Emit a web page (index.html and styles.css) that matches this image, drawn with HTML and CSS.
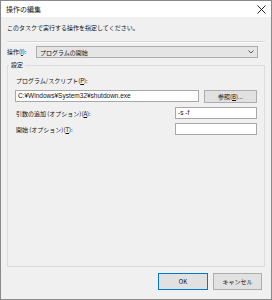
FILE: index.html
```
<!DOCTYPE html>
<html lang="ja">
<head>
  <meta charset="UTF-8" />
  <meta name="viewport" content="width=device-width, initial-scale=1" />
  <link rel="stylesheet" href="styles.css">
</head>
<body>
  <div class="window">
    <div class="titlebar">
      <span class="title">操作の編集</span>
      <svg class="close" width="9" height="9" viewBox="0 0 9 9">
        <path d="M0.5 0.5 L8.5 8.5 M8.5 0.5 L0.5 8.5" stroke="#222" stroke-width="1" fill="none" />
      </svg>
    </div>
    <div class="dialog-body">
      <p class="prompt">このタスクで実行する操作を指定してください。</p>
      <div class="sep"></div>
      <div class="action-row">
        <span class="action-label">操作(<u>I</u>):</span>
        <div class="combo">
          <span>プログラムの開始</span>
          <svg class="chevron" width="6" height="4" viewBox="0 0 6 4">
            <path d="M0.5 0.5 L3 3 L5.5 0.5" stroke="#555" stroke-width="1" fill="none" />
          </svg>
        </div>
      </div>

      <fieldset class="group">
        <legend>設定</legend>
        <div class="field-label">プログラム/スクリプト(<u>P</u>):</div>
        <div class="prog-row">
          <div class="textbox wide">C:¥Windows¥System32¥shutdown.exe</div>
          <button class="btn browse">参照(<u>B</u>)...</button>
        </div>
        <div class="opt-row">
          <span class="opt-label">引数の追加 (オプション)(<u>A</u>):</span>
          <div class="textbox short">-s -f</div>
        </div>
        <div class="opt-row">
          <span class="opt-label">開始 (オプション)(<u>T</u>):</span>
          <div class="textbox short"></div>
        </div>
      </fieldset>

      <div class="footer">
        <button class="btn ok">OK</button>
        <button class="btn">キャンセル</button>
      </div>
    </div>
  </div>
</body>
</html>
```

FILE: styles.css
```
html, body {
  margin: 0;
  padding: 0;
  background: #f0f0f0;
  font-family: "Noto Sans CJK JP", "Noto Sans", sans-serif;
  font-size: 6px;
  color: #111;
}
.window {
  width: 272px;
  height: 300px;
  box-sizing: border-box;
  border: 1px solid #8a8a8a;
  display: flex;
  flex-direction: column;
}
.titlebar {
  height: 16px;
  background: #fff;
  display: flex;
  align-items: center;
  justify-content: space-between;
  padding: 0 5px 0 5px;
  flex-shrink: 0;
}
.title {
  font-size: 7px;
  color: #222;
}
.dialog-body {
  flex: 1;
  display: flex;
  flex-direction: column;
  padding: 0 6px 9px 6px;
}
.prompt {
  margin: 6px 0 0 0;
  line-height: 10px;
  height: 10px;
}
.sep {
  margin-top: 8px;
  height: 1px;
  background: #d4d4d4;
  border-bottom: 1px solid #fcfcfc;
}
.action-row {
  display: flex;
  align-items: center;
  margin-top: 3px;
  padding-right: 7px;
}
.action-label {
  width: 29px;
  line-height: 12px;
}
.combo {
  flex: 1;
  height: 12px;
  box-sizing: border-box;
  background: #e5e5e5;
  border: 1px solid #adadad;
  display: flex;
  align-items: center;
  justify-content: space-between;
  padding: 0 3px 0 3px;
}
.group {
  flex: 1;
  margin: 3px 0 0 0;
  padding: 0 7px 0 7px;
  border: 1px solid #dcdcdc;
  min-inline-size: 0;
}
.group legend {
  padding: 0 2px;
  margin-left: -6px;
  line-height: 8px;
}
.field-label {
  margin-top: 7px;
  line-height: 10px;
  padding-left: 1px;
}
.prog-row {
  display: flex;
  gap: 5px;
  margin-top: 4px;
  align-items: flex-start;
}
.textbox {
  height: 12px;
  box-sizing: border-box;
  background: #fff;
  border: 1px solid #a8a8a8;
  font-family: "Liberation Sans", "Noto Sans CJK JP", sans-serif;
  font-size: 6.5px;
  line-height: 10px;
  padding: 0 2px;
  white-space: nowrap;
}
.textbox.wide {
  width: 184px;
}
.textbox.short {
  width: 82px;
}
.btn {
  font-family: "Noto Sans CJK JP", sans-serif;
  font-size: 6px;
  color: #111;
  background: #e1e1e1;
  border: 1px solid #adadad;
  padding: 0;
  box-sizing: border-box;
}
.browse {
  width: 53px;
  height: 13px;
}
.opt-row {
  display: flex;
  align-items: center;
  justify-content: space-between;
  margin-top: 4px;
}
.opt-label {
  padding-left: 1px;
}
.footer {
  display: flex;
  justify-content: flex-end;
  gap: 5px;
  margin-top: 6px;
  padding-right: 3px;
}
.footer .btn {
  width: 49px;
  height: 17px;
}
.footer .ok {
  width: 50px;
  border-color: #0078d7;
}
```
